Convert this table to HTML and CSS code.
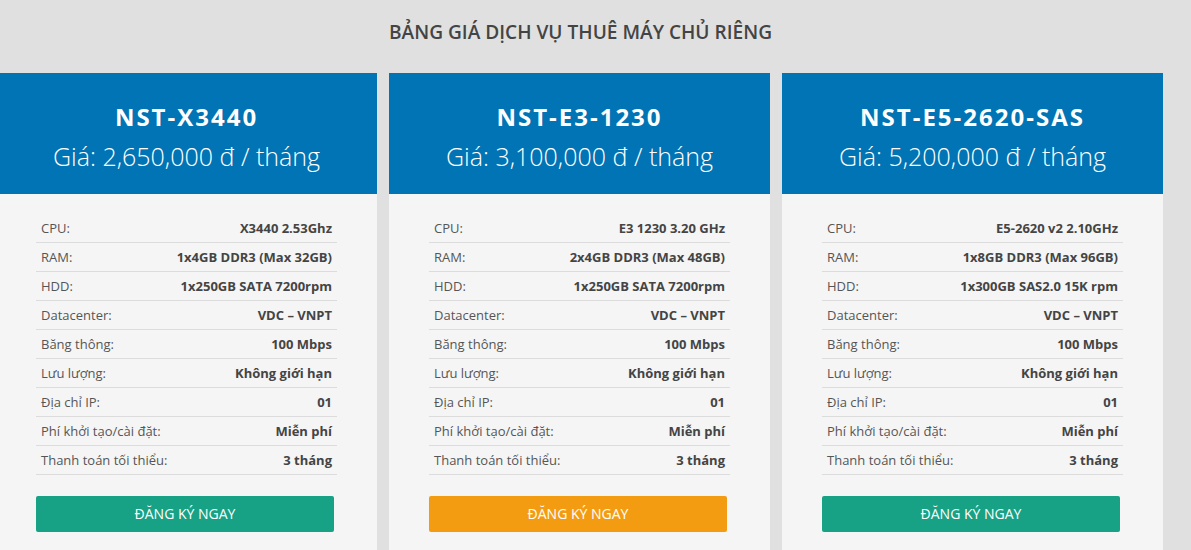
FILE: index.html
```html
<!DOCTYPE html>
<html lang="vi">
<head>
    <meta charset="UTF-8">
    <meta name="viewport" content="width=device-width, initial-scale=1.0">
    <title>Bảng giá thuê máy chủ riêng</title>
    <link rel="stylesheet" href="styles.css">
</head>
<body>
    <h1 class="page-title">BẢNG GIÁ DỊCH VỤ THUÊ MÁY CHỦ RIÊNG</h1>
    <div class="plans">
        <div class="plan">
            <div class="plan-head">
                <h2>NST-X3440</h2>
                <p class="price">Giá: 2,650,000 đ / tháng</p>
            </div>
            <div class="plan-body">
                <table class="specs">
                    <tr><td>CPU:</td><td>X3440 2.53Ghz</td></tr>
                    <tr><td>RAM:</td><td>1x4GB DDR3 (Max 32GB)</td></tr>
                    <tr><td>HDD:</td><td>1x250GB SATA 7200rpm</td></tr>
                    <tr><td>Datacenter:</td><td>VDC – VNPT</td></tr>
                    <tr><td>Băng thông:</td><td>100 Mbps</td></tr>
                    <tr><td>Lưu lượng:</td><td>Không giới hạn</td></tr>
                    <tr><td>Địa chỉ IP:</td><td>01</td></tr>
                    <tr><td>Phí khởi tạo/cài đặt:</td><td>Miễn phí</td></tr>
                    <tr><td>Thanh toán tối thiểu:</td><td>3 tháng</td></tr>
                </table>
                <a href="#" class="btn">ĐĂNG KÝ NGAY</a>
            </div>
        </div>
        <div class="plan">
            <div class="plan-head">
                <h2>NST-E3-1230</h2>
                <p class="price">Giá: 3,100,000 đ / tháng</p>
            </div>
            <div class="plan-body">
                <table class="specs">
                    <tr><td>CPU:</td><td>E3 1230 3.20 GHz</td></tr>
                    <tr><td>RAM:</td><td>2x4GB DDR3 (Max 48GB)</td></tr>
                    <tr><td>HDD:</td><td>1x250GB SATA 7200rpm</td></tr>
                    <tr><td>Datacenter:</td><td>VDC – VNPT</td></tr>
                    <tr><td>Băng thông:</td><td>100 Mbps</td></tr>
                    <tr><td>Lưu lượng:</td><td>Không giới hạn</td></tr>
                    <tr><td>Địa chỉ IP:</td><td>01</td></tr>
                    <tr><td>Phí khởi tạo/cài đặt:</td><td>Miễn phí</td></tr>
                    <tr><td>Thanh toán tối thiểu:</td><td>3 tháng</td></tr>
                </table>
                <a href="#" class="btn btn-orange">ĐĂNG KÝ NGAY</a>
            </div>
        </div>
        <div class="plan">
            <div class="plan-head">
                <h2>NST-E5-2620-SAS</h2>
                <p class="price">Giá: 5,200,000 đ / tháng</p>
            </div>
            <div class="plan-body">
                <table class="specs">
                    <tr><td>CPU:</td><td>E5-2620 v2 2.10GHz</td></tr>
                    <tr><td>RAM:</td><td>1x8GB DDR3 (Max 96GB)</td></tr>
                    <tr><td>HDD:</td><td>1x300GB SAS2.0 15K rpm</td></tr>
                    <tr><td>Datacenter:</td><td>VDC – VNPT</td></tr>
                    <tr><td>Băng thông:</td><td>100 Mbps</td></tr>
                    <tr><td>Lưu lượng:</td><td>Không giới hạn</td></tr>
                    <tr><td>Địa chỉ IP:</td><td>01</td></tr>
                    <tr><td>Phí khởi tạo/cài đặt:</td><td>Miễn phí</td></tr>
                    <tr><td>Thanh toán tối thiểu:</td><td>3 tháng</td></tr>
                </table>
                <a href="#" class="btn">ĐĂNG KÝ NGAY</a>
            </div>
        </div>
    </div>
</body>
</html>
```

FILE: styles.css
```css
body {
    font-family: "Open Sans", "Liberation Sans", sans-serif;
    margin: 0;
    padding: 0;
    background-color: #e0e0e0;
    color: #444;
    overflow: hidden;
}
.page-title {
    margin: 0;
    padding: 20px 30px 0 0;
    height: 53px;
    text-align: center;
    font-size: 19.1px;
    font-weight: 600;
    color: #444;
    line-height: 24px;
}
.plans {
    display: flex;
    gap: 12px;
    margin-left: -4px;
}
.plan {
    width: 381px;
    flex: none;
    background-color: #f5f5f5;
}
.plan-head {
    background-color: #0074b4;
    color: white;
    text-align: center;
    height: 121px;
    box-sizing: border-box;
    padding-top: 28px;
}
.plan-head h2 {
    margin: 0;
    font-size: 24px;
    font-weight: 700;
    letter-spacing: 2px;
    line-height: 32px;
}
.price {
    margin: 7px 0 0;
    font-size: 25px;
    font-weight: 300;
    line-height: 32px;
}
.plan-body {
    padding: 20px 40px 30px;
}
.specs {
    width: 301px;
    border-collapse: collapse;
    font-size: 13px;
    white-space: nowrap;
}
.specs td {
    padding: 0 5px;
    height: 28px;
    border-bottom: 1px solid #dcdcdc;
    color: #555;
}
.specs td:last-child {
    padding-left: 0;
    text-align: right;
    font-weight: 700;
    color: #444;
}
.btn {
    display: block;
    width: 298px;
    height: 36px;
    margin-top: 21px;
    line-height: 36px;
    text-align: center;
    background-color: #17a185;
    color: white;
    font-size: 14px;
    font-weight: 500;
    text-decoration: none;
    border-radius: 2px;
}
.btn-orange {
    background-color: #f39c12;
}
```
